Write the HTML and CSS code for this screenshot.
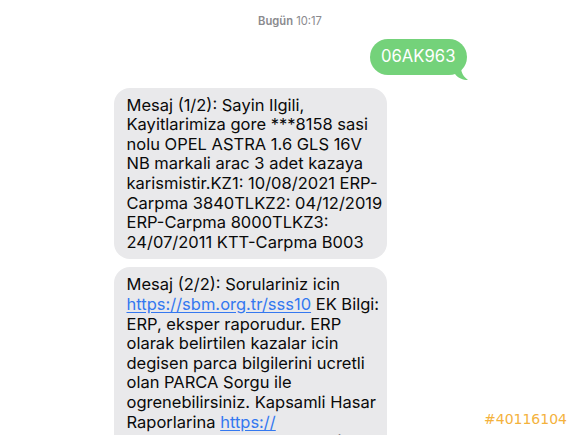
FILE: index.html
```html
<!DOCTYPE html>
<html lang="tr">
<head>
<meta charset="utf-8">
<title>Mesajlar</title>
<link rel="stylesheet" href="styles.css">
</head>
<body>
<main class="thread">
  <div class="stamp"><b>Bugün</b> 10:17</div>

  <div class="row row-out">
    <div class="bubble out">
      06AK963
      <svg class="tail tail-out" width="14" height="14" viewBox="0 0 14 14">
        <path d="M0 0 L6 0 C6 6 9 10 13 13 C8 13 3 11 0 7 Z" fill="#74d27a"/>
      </svg>
    </div>
  </div>

  <div class="row row-in">
    <div class="bubble in">
      Mesaj (1/2): Sayin Ilgili,<br>
      Kayitlarimiza gore ***8158 sasi<br>
      nolu OPEL ASTRA 1.6 GLS 16V<br>
      NB markali arac 3 adet kazaya<br>
      karismistir.KZ1: 10/08/2021 ERP-<br>
      Carpma 3840TLKZ2: 04/12/2019<br>
      ERP-Carpma 8000TLKZ3:<br>
      24/07/2011 KTT-Carpma B003
    </div>
  </div>

  <div class="row row-in">
    <div class="bubble in">
      Mesaj (2/2): Sorulariniz icin<br>
      <a class="link" href="#">https://sbm.org.tr/sss10</a> EK Bilgi:<br>
      ERP, eksper raporudur. ERP<br>
      olarak belirtilen kazalar icin<br>
      degisen parca bilgilerini ucretli<br>
      olan PARCA Sorgu ile<br>
      ogrenebilirsiniz. Kapsamli Hasar<br>
      Raporlarina <a class="link" href="#">https://</a><br>
      <a class="link" href="#">sbmsorgu.sbm.org.tr</a> adresinden
    </div>
  </div>
</main>
<div class="tag">#40116104</div>
</body>
</html>
```

FILE: styles.css
```css
html, body {
  margin: 0;
  padding: 0;
  background: #ffffff;
}

body {
  width: 580px;
  height: 435px;
  overflow: hidden;
  position: relative;
  font-family: "Inter", "Liberation Sans", sans-serif;
}

.thread {
  width: 353px;
  margin: 0 auto;
  padding-top: 14px;
  display: flex;
  flex-direction: column;
}

.stamp {
  text-align: center;
  font-size: 11.2px;
  line-height: 14px;
  color: #8a8a8e;
  margin-bottom: 11px;
}

.stamp b {
  font-weight: 600;
}

.row {
  display: flex;
}

.row-out {
  justify-content: flex-end;
  margin-bottom: 13px;
}

.row-in {
  justify-content: flex-start;
  margin-bottom: 8px;
}

.bubble {
  position: relative;
  font-size: 16.5px;
  line-height: 19.6px;
  white-space: nowrap;
}

.out {
  background: #74d27a;
  color: #ffffff;
  border-radius: 18px;
  padding: 8px 11px 8px 11px;
  font-size: 16.7px;
}

.tail {
  position: absolute;
}

.tail-out {
  right: -2px;
  bottom: -6px;
}

.in {
  background: #e9e9eb;
  color: #0a0a0a;
  border-radius: 16px;
  width: 273px;
  box-sizing: border-box;
  padding: 8px 12px 7px 13px;
}

.link {
  color: #3478f0;
  text-decoration: underline;
  text-underline-offset: 2px;
}

.tag {
  position: absolute;
  right: 13px;
  bottom: 8px;
  font-family: "DejaVu Sans", sans-serif;
  font-size: 14px;
  color: #f4b23c;
}
```
